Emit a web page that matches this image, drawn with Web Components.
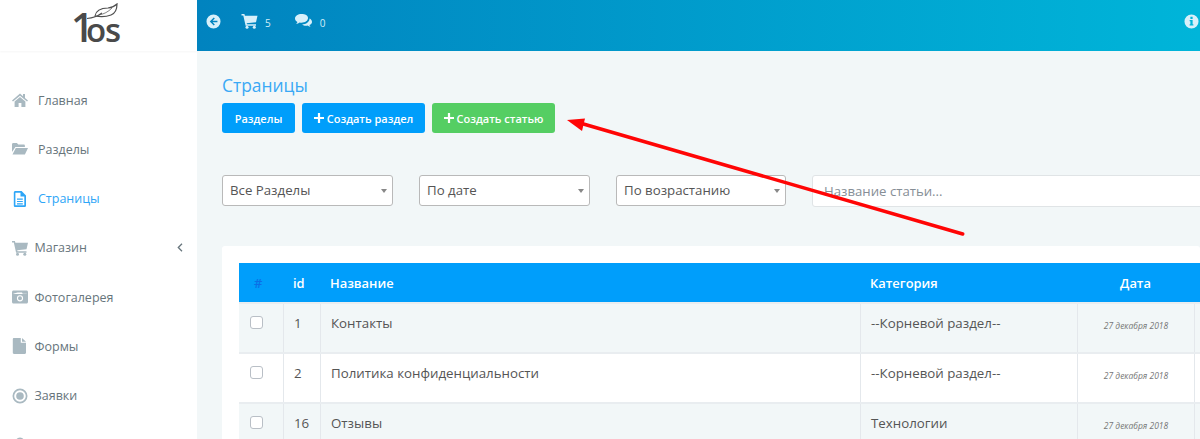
<!DOCTYPE html>
<html lang="ru">
<head>
<meta charset="utf-8">
<title>Страницы</title>
<style>
  html, body { margin: 0; height: 100%; overflow: hidden; }
  body { font-family: "Open Sans", "Liberation Sans", sans-serif; background: #f2f7f8; }
</style>
</head>
<body>
<admin-shell>
  <site-logo slot="logo"></site-logo>
  <side-nav slot="nav">
    <nav-item icon="home" wide>Главная</nav-item>
    <nav-item icon="folder" wide>Разделы</nav-item>
    <nav-item icon="page" wide active>Страницы</nav-item>
    <nav-item icon="cart" more>Магазин</nav-item>
    <nav-item icon="photo">Фотогалерея</nav-item>
    <nav-item icon="file">Формы</nav-item>
    <nav-item icon="target">Заявки</nav-item>
    <nav-item icon="user"></nav-item>
  </side-nav>
  <top-bar slot="top"></top-bar>

  <page-head>Страницы</page-head>
  <tool-bar>
    <action-button w="73">Разделы</action-button>
    <action-button w="123" plus>Создать раздел</action-button>
    <action-button w="123" plus green>Создать статью</action-button>
  </tool-bar>
  <filter-bar>
    <select-box>Все Разделы</select-box>
    <select-box>По дате</select-box>
    <select-box>По возрастанию</select-box>
    <search-box>Название статьи...</search-box>
  </filter-bar>
  <table-card>
    <table-row head num="#" ident="id" name="Название" cat="Категория" date="Дата"></table-row>
    <table-row ident="1" name="Контакты" cat="--Корневой раздел--" date="27 декабря 2018"></table-row>
    <table-row even ident="2" name="Политика конфиденциальности" cat="--Корневой раздел--" date="27 декабря 2018"></table-row>
    <table-row ident="16" name="Отзывы" cat="Технологии" date="27 декабря 2018"></table-row>
  </table-card>
</admin-shell>
<arrow-mark></arrow-mark>

<script>
const ICONS = {
  home: '<path d="M8 1.600 0 8.400l1 1.100L8 3.700l7 5.800 1-1.100-3-2.500V2h-2v2.300zM8 5 2.600 9.500V15h4v-4h2.800v4h4V9.500z"/>',
  folder: '<path d="M0 3.400C0 2.600.6 2 1.300 2h3.600l1.400 1.600h5.400c.7 0 1.200.5 1.200 1.200V6H3.400L0 11zM3.800 7H16l-3.100 6.400H.5z"/>',
  page: '<path fill-rule="evenodd" d="M3.400 0h6.200L14 4.400v10c0 .9-.7 1.600-1.600 1.600h-9c-.9 0-1.600-.7-1.600-1.600V1.600C1.800.7 2.500 0 3.400 0zm0 1.700v12.600h8.900V5.600H8.500V1.700zM5 7.600h5.800v1.200H5zm0 2.300h5.800v1.200H5zm0 2.300h5.800v1.200H5z"/>',
  cart: '<path d="M0 1h2.900l.5 1.700H16l-1.500 6.500-9.300 1 .3 1.100h9v1.500H4.100L1.800 2.500H0z"/><circle cx="5.500" cy="14.300" r="1.500"/><circle cx="12.800" cy="14.300" r="1.500"/>',
  photo: '<path fill-rule="evenodd" d="M1.500 1.500h13c.8 0 1.500.7 1.500 1.500v10c0 .8-.7 1.500-1.500 1.500h-13C.7 14.500 0 13.800 0 13V3c0-.8.7-1.500 1.500-1.500zM1.300 4.800V5h13.400v-.2h-4l-.7-1.400H5.500zM8 6.200a3.100 3.100 0 1 0 0 6.200 3.100 3.100 0 0 0 0-6.200zm0 1.100a2 2 0 1 1 0 4 2 2 0 0 1 0-4z"/>',
  file: '<path d="M2 0h6.800v4.800H14v10c0 .7-.5 1.200-1.200 1.200H2c-.7 0-1.200-.5-1.200-1.200V1.200C.8.500 1.300 0 2 0zm8 0 4 3.700h-4z"/>',
  target: '<path fill-rule="evenodd" d="M8 .5a7.500 7.500 0 1 1 0 15 7.500 7.500 0 0 1 0-15zm0 1.700a5.800 5.800 0 1 0 0 11.600A5.800 5.800 0 0 0 8 2.200zm0 2a3.800 3.800 0 1 1 0 7.600 3.800 3.800 0 0 1 0-7.600z"/>',
  user: '<circle cx="8" cy="4.500" r="4"/><path d="M1 16c0-4 3-6 7-6s7 2 7 6z"/>'
}

customElements.define('admin-shell', class extends HTMLElement {
  constructor() {
    super()
    this.attachShadow({ mode: "open" })
    this.shadowRoot.innerHTML = `
      <style>
        :host { display: grid; grid-template-columns: 197px 1fr; height: 439px; overflow: hidden; }
        aside { background: #fff; display: flex; flex-direction: column; min-width: 0; }
        .right { display: flex; flex-direction: column; min-width: 0; }
        main { padding: 23px 0 0 25px; display: flex; flex-direction: column; }
      </style>
      <aside><slot name="logo"></slot><slot name="nav"></slot></aside>
      <div class="right">
        <slot name="top"></slot>
        <main><slot></slot></main>
      </div>`
  }
})

customElements.define('site-logo', class extends HTMLElement {
  constructor() {
    super()
    this.attachShadow({ mode: "open" })
    this.shadowRoot.innerHTML = `
      <style>
        :host { display: flex; height: 51px; padding-left: 71px; box-sizing: border-box; box-shadow: 0 1px 2px rgba(0,0,0,.04); }
        .mark { position: relative; height: 51px; padding-top: 3px; box-sizing: border-box;
          color: #4a4a4a; font-weight: 600; font-size: 33px; line-height: 48px; letter-spacing: -1px; white-space: nowrap; }
        .one { font-size: 40px; letter-spacing: -8px; }
        svg { position: absolute; left: 15px; top: 3px; }
      </style>
      <div class="mark">
        <span class="one">1</span>os
        <svg width="34" height="20" viewBox="0 0 34 20" fill="none" stroke="#4f4f4f" stroke-width="1.200">
          <path d="M1 15.500C7 15 12 13 16 10"/>
          <path d="M9 13C10 7 16 5 22 5c4-.5 7-2 9-4 0 5-1 9-6 11-5 2-11 2-16 1z"/>
          <path d="M13 12c5-1 9-3 13-7" stroke-width=".7"/>
        </svg>
      </div>`
  }
})

customElements.define('side-nav', class extends HTMLElement {
  constructor() {
    super()
    this.attachShadow({ mode: "open" })
    this.shadowRoot.innerHTML = `
      <style>:host { display: flex; flex-direction: column; padding-top: 24.500px; }</style>
      <slot></slot>`
  }
})

customElements.define('nav-item', class extends HTMLElement {
  connectedCallback() {
    if (this.shadowRoot) return
    this.attachShadow({ mode: "open" })
    const more = this.hasAttribute("more")
      ? `<svg class="more" width="6" height="9" viewBox="0 0 6 9" fill="none" stroke="#67757c" stroke-width="1.300"><path d="M5 .8 1.300 4.500 5 8.200"/></svg>`
      : ""
    this.shadowRoot.innerHTML = `
      <style>
        :host { display: flex; align-items: center; height: 49.250px; padding: 0 14px 0 12px; font-size: 12.500px;
          color: #67757c; gap: 6.500px; flex: none; }
        :host([wide]) { gap: 10px; }
        :host([active]) { color: #2ea6f7; }
        svg.ico { width: 16px; height: 16px; fill: #a9b9c1; flex: none; }
        :host([active]) svg.ico { fill: #2ea6f7; }
        span { flex: 1; }
      </style>
      <svg class="ico" viewBox="0 0 16 16">${ICONS[this.getAttribute("icon")]}</svg>
      <span><slot></slot></span>${more}`
  }
})

customElements.define('top-bar', class extends HTMLElement {
  constructor() {
    super()
    this.attachShadow({ mode: "open" })
    this.shadowRoot.innerHTML = `
      <style>
        :host { display: flex; align-items: center; height: 51px; padding: 0 0 9px 9px; box-sizing: border-box;
          background: linear-gradient(90deg, #0183bf, #00b5d9); color: #d3eef8; font-size: 10px; }
        svg { fill: #d8f0fa; flex: none; }
        .n { margin: 3px 0 0 7px; }
        .back { margin-right: 20px; }
        .cmt { margin-left: 24px; }
        .info { margin-left: auto; margin-right: 1px; }
      </style>
      <svg class="back" width="15" height="15" viewBox="0 0 16 16"><path fill-rule="evenodd" d="M8 .5a7.500 7.500 0 1 1 0 15 7.500 7.500 0 0 1 0-15zM8.300 3.800 4 8l4.300 4.200 1.100-1.100L7 8.900h5.200V7.100H7l2.400-2.200z"/></svg>
      <svg width="17" height="16" viewBox="0 0 16 16">${ICONS.cart}</svg>
      <span class="n">5</span>
      <svg class="cmt" width="18" height="14" viewBox="0 0 18 14"><path d="M6.500 0C3 0 0 2 0 4.500c0 1.400.9 2.700 2.400 3.500-.2.800-.7 1.500-1.300 2 1.300-.1 2.600-.7 3.500-1.500.6.100 1.300.2 1.900.2 3.600 0 6.500-2 6.500-4.700S10.100 0 6.500 0z"/><path d="M14.500 4.500c.1 3.500-3.400 5.800-7.300 5.800.9 1 2.300 1.500 3.800 1.500.5 0 1-.1 1.500-.2.800.7 1.800 1.200 3 1.300-.5-.5-.9-1.100-1-1.800 1.500-.7 2.500-1.800 2.500-3.200 0-1.500-1-2.700-2.500-3.400z"/></svg>
      <span class="n">0</span>
      <svg class="info" width="15" height="15" viewBox="0 0 16 16"><path fill-rule="evenodd" d="M8 .5a7.500 7.500 0 1 1 0 15 7.500 7.500 0 0 1 0-15zM6.800 3v2.200h2.400V3zM6 6.500v1.300h.8v3H6v1.400h4v-1.400h-.8V6.500z"/></svg>`
  }
})

customElements.define('page-head', class extends HTMLElement {
  constructor() {
    super()
    this.attachShadow({ mode: "open" })
    this.shadowRoot.innerHTML = `
      <style>:host { display: block; font-size: 17.400px; line-height: 22px; height: 29px; color: #3aa9f5; }</style>
      <slot></slot>`
  }
})

customElements.define('tool-bar', class extends HTMLElement {
  constructor() {
    super()
    this.attachShadow({ mode: "open" })
    this.shadowRoot.innerHTML = `
      <style>:host { display: flex; gap: 7px; height: 72px; align-items: flex-start; }</style>
      <slot></slot>`
  }
})

customElements.define('action-button', class extends HTMLElement {
  connectedCallback() {
    if (this.shadowRoot) return
    this.attachShadow({ mode: "open" })
    const plus = this.hasAttribute("plus")
      ? `<svg width="10" height="10" viewBox="0 0 10 10"><path fill="#fff" d="M3.900 0h2.200v3.900H10v2.200H6.100V10H3.900V6.100H0V3.900h3.900z"/></svg>`
      : ""
    this.shadowRoot.innerHTML = `
      <style>
        :host { display: flex; align-items: center; justify-content: center; gap: 3px; height: 30px;
          width: ${this.getAttribute("w")}px; border-radius: 3px; background: #009efb; color: #fff;
          font-size: 11px; font-weight: 600; box-sizing: border-box; }
        :host([green]) { background: #55ce63; }
      </style>
      ${plus}<slot></slot>`
  }
})

customElements.define('filter-bar', class extends HTMLElement {
  constructor() {
    super()
    this.attachShadow({ mode: "open" })
    this.shadowRoot.innerHTML = `
      <style>:host { display: flex; gap: 26px; height: 71px; align-items: flex-start; }</style>
      <slot></slot>`
  }
})

customElements.define('select-box', class extends HTMLElement {
  constructor() {
    super()
    this.attachShadow({ mode: "open" })
    this.shadowRoot.innerHTML = `
      <style>
        :host { display: flex; align-items: center; justify-content: space-between; box-sizing: border-box;
          width: 171px; height: 31px; padding: 0 5px 2px 7px; background: #fff; border: 1px solid #b9b9b9;
          border-radius: 3px; font-size: 13.250px; color: #555; flex: none; }
        :host(:nth-of-type(3)) { width: 170px; }
        i { width: 0; height: 0; margin-top: 2px; border: 3px solid transparent; border-top: 4px solid #888; border-bottom: 0; }
      </style>
      <span><slot></slot></span><i></i>`
  }
})

customElements.define('search-box', class extends HTMLElement {
  constructor() {
    super()
    this.attachShadow({ mode: "open" })
    this.shadowRoot.innerHTML = `
      <style>
        :host { display: flex; align-items: center; box-sizing: border-box; flex: 1; height: 32px;
          margin-right: -4px; padding: 0 11px; background: #fff; border: 1px solid #e0e4e6;
          border-radius: 3px; font-size: 13.200px; color: #868e96; }
      </style>
      <slot></slot>`
  }
})

customElements.define('table-card', class extends HTMLElement {
  constructor() {
    super()
    this.attachShadow({ mode: "open" })
    this.shadowRoot.innerHTML = `
      <style>
        :host { display: block; background: #fff; border-radius: 3px; padding: 17px 0 17px 17px; }
      </style>
      <slot></slot>`
  }
})

customElements.define('table-row', class extends HTMLElement {
  connectedCallback() {
    if (this.shadowRoot) return
    this.attachShadow({ mode: "open" })
    const a = n => this.getAttribute(n) || ""
    const first = this.hasAttribute("head") ? `<b>${a("num")}</b>` : `<input type="checkbox" tabindex="-1">`
    this.shadowRoot.innerHTML = `
      <style>
        :host { display: grid; grid-template-columns: 45px 37px 540px 217px 117px 1fr; height: 50.200px;
          box-sizing: border-box; background: #f2f7f8; color: #555; font-size: 13.300px; border-top: 2px solid #e9edf0; }
        :host([even]) { background: #fff; }
        :host([head]) { height: 39px; background: #009efb; color: #fff; font-size: 12.900px; font-weight: 600; border-top: 0; }
        div { box-sizing: border-box; border-right: 1px solid #e4e8ec; padding: 10px 10px 0; line-height: 18px; min-width: 0; white-space: nowrap; }
        :host([head]) div { border-right: 0; padding: 11px 11px 0 9px; }
        .c0 { padding: 12px 0 0 11px; }
        :host([head]) .c0 { padding-left: 11px; }
        .c0 b { font-weight: 600; color: #0b6fe6; padding-left: 4px; }
        .c0 input { appearance: none; -webkit-appearance: none; display: block; margin: 0; width: 13px; height: 13px;
          box-sizing: border-box; background: #fff; border: 1px solid #b9bfc6; border-radius: 3px; }
        .c4 { text-align: center; font-size: 8.500px; font-style: italic; color: #777; padding-top: 13px; }
        :host([head]) .c4 { font-size: 12.900px; font-style: normal; color: #fff; }
      </style>
      <div class="c0">${first}</div>
      <div class="c1">${a("ident")}</div>
      <div class="c2">${a("name")}</div>
      <div class="c3">${a("cat")}</div>
      <div class="c4">${a("date")}</div>
      <div class="c5"></div>`
  }
})

customElements.define('arrow-mark', class extends HTMLElement {
  constructor() {
    super()
    this.attachShadow({ mode: "open" })
    this.shadowRoot.innerHTML = `
      <style>:host { display: block; position: absolute; left: 560px; top: 110px; }</style>
      <svg width="410" height="130" viewBox="0 0 410 130">
        <path d="M20 13 402.700 124" stroke="#ff0505" stroke-width="3.500" stroke-linecap="round" fill="none"/>
        <path d="M7 10 25 8.500 22 21z" fill="#ff0505"/>
      </svg>`
  }
})
</script>
</body>
</html>
